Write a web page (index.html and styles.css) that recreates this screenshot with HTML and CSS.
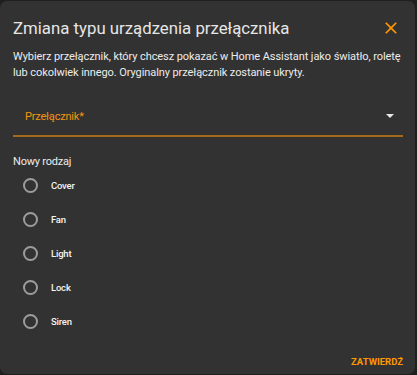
FILE: index.html
```html
<!DOCTYPE html>
<html lang="pl">
<head>
<meta charset="utf-8">
<link rel="stylesheet" href="styles.css">
</head>
<body>
<div class="dialog">
  <div class="header">
    <h2 class="title">Zmiana typu urządzenia przełącznika</h2>
    <button class="close" aria-label="Zamknij">
      <svg viewBox="0 0 24 24" width="24" height="24"><path d="M19,6.41L17.59,5L12,10.59L6.41,5L5,6.41L10.59,12L5,17.59L6.41,19L12,13.41L17.59,19L19,17.59L13.41,12L19,6.41Z" fill="currentColor"/></svg>
    </button>
  </div>
  <p class="desc">Wybierz przełącznik, który chcesz pokazać w Home Assistant jako światło, roletę lub cokolwiek innego. Oryginalny przełącznik zostanie ukryty.</p>
  <div class="select">
    <span class="select-label">Przełącznik*</span>
    <span class="arrow"></span>
  </div>
  <div class="group-label">Nowy rodzaj</div>
  <div class="radios">
    <label class="radio"><span class="circle"></span><span class="rlabel">Cover</span></label>
    <label class="radio"><span class="circle"></span><span class="rlabel">Fan</span></label>
    <label class="radio"><span class="circle"></span><span class="rlabel">Light</span></label>
    <label class="radio"><span class="circle"></span><span class="rlabel">Lock</span></label>
    <label class="radio"><span class="circle"></span><span class="rlabel">Siren</span></label>
  </div>
  <div class="footer">
    <button class="confirm">ZATWIERDŹ</button>
  </div>
</div>
</body>
</html>
```
FILE: styles.css
```css
html, body {
  margin: 0;
  padding: 0;
  background: #1f1f1f;
}
body {
  font-family: Roboto, "Noto Sans", sans-serif;
  width: 417px;
  height: 375px;
  overflow: hidden;
  padding-top: 1px;
  box-sizing: border-box;
}
.dialog {
  width: 415px;
  height: 373px;
  background: #323232;
  border-radius: 7px;
  box-sizing: border-box;
  padding: 0 12px 0 13px;
  display: flex;
  flex-direction: column;
  color: #e1e1e1;
}
.header {
  display: flex;
  align-items: center;
  justify-content: space-between;
  padding-top: 15px;
  height: 24px;
}
.title {
  margin: 0;
  font-size: 16.8px;
  font-weight: 400;
  line-height: 24px;
  color: #e6e6e6;
}
.close {
  background: none;
  border: 0;
  padding: 0;
  width: 20px;
  height: 20px;
  color: #ff9800;
  margin-right: 2px;
  display: flex;
}
.close svg {
  width: 20px;
  height: 20px;
}
.desc {
  margin: 9px 0 0;
  font-size: 11px;
  letter-spacing: -0.08px;
  line-height: 16px;
  color: #ececec;
}
.select {
  margin-top: 16px;
  height: 38px;
  border-bottom: 2px solid #a46a1a;
  display: flex;
  align-items: center;
  justify-content: space-between;
  padding: 0 9px 0 12px;
}
.select-label {
  color: #f39510;
  font-size: 11px;
  letter-spacing: -0.2px;
}
.arrow {
  width: 0;
  height: 0;
  border-left: 4.5px solid transparent;
  border-right: 4.5px solid transparent;
  border-top: 4.5px solid #e8e8e8;
}
.group-label {
  margin-top: 17px;
  font-size: 11px;
  letter-spacing: -0.2px;
  line-height: 16px;
  color: #ececec;
}
.radios {
  display: flex;
  flex-direction: column;
  margin-top: -2px;
}
.radio {
  height: 34px;
  display: flex;
  align-items: center;
  padding-left: 10px;
  gap: 13px;
}
.circle {
  width: 11px;
  height: 11px;
  border: 2px solid #9c9c9c;
  border-radius: 50%;
}
.rlabel {
  font-size: 9.5px;
  font-weight: 500;
  letter-spacing: -0.2px;
  color: #f4f4f4;
}
.footer {
  margin-top: 14px;
  display: flex;
  justify-content: flex-end;
}
.confirm {
  background: none;
  border: 0;
  padding: 0;
  font-family: Roboto, sans-serif;
  font-size: 9.5px;
  font-weight: 700;
  letter-spacing: 0;
  line-height: 20px;
  color: #ff9800;
  margin-right: 0;
}
```
